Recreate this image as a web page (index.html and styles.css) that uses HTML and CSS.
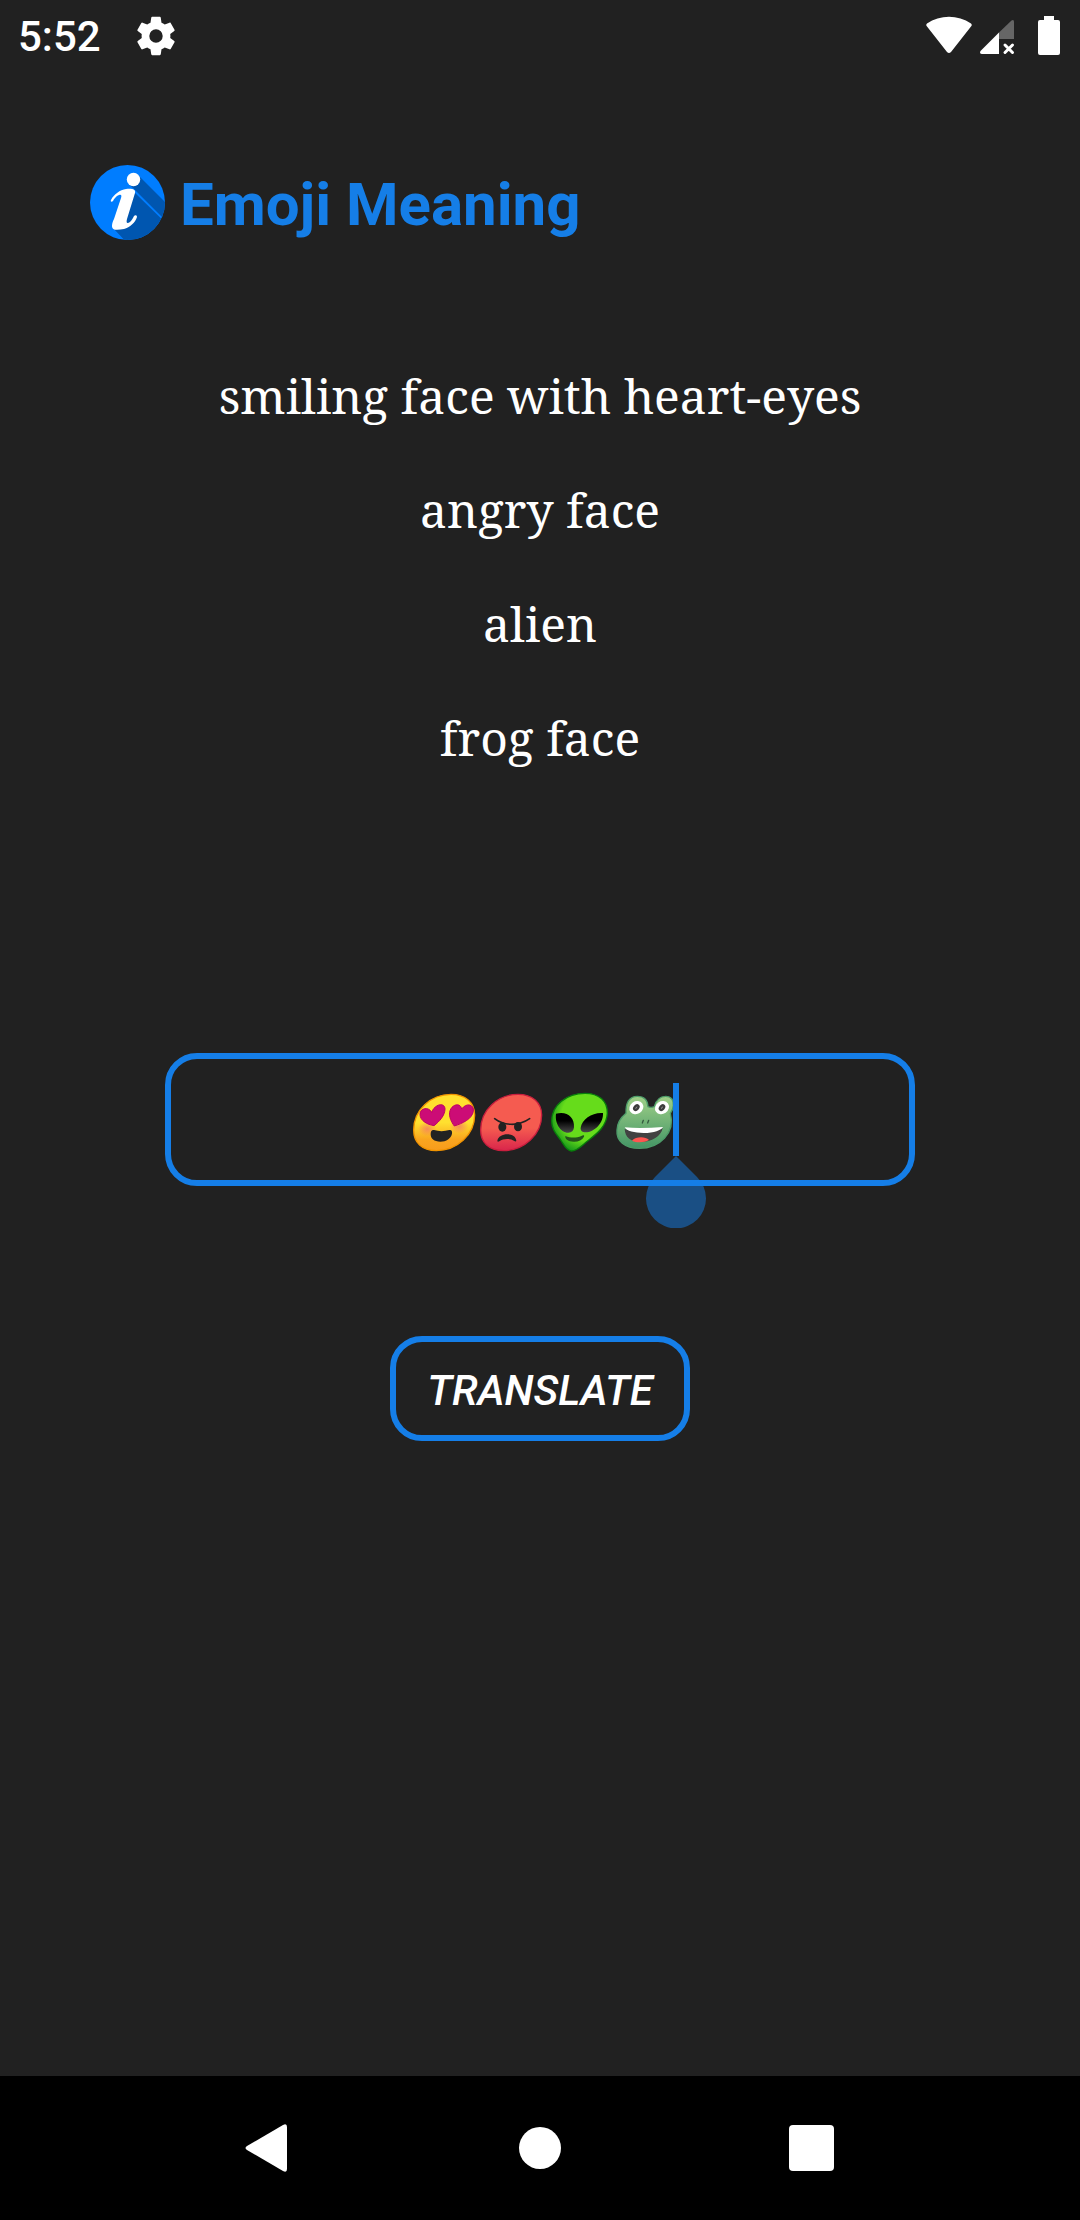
FILE: index.html
```
<!DOCTYPE html>
<html lang="en">
<head>
<meta charset="utf-8">
<meta name="viewport" content="width=device-width, initial-scale=1">
<title>Emoji Meaning</title>
<link rel="stylesheet" href="styles.css">
</head>
<body>
<div class="status">
  <span class="clock">5:52</span>
  <svg class="gear" viewBox="0 0 24 24" aria-hidden="true"><path fill="#fff" d="M19.43 12.98c.04-.32.07-.64.07-.98s-.03-.66-.07-.98l2.110-1.650c.19-.15.24-.42.12-.64l-2-3.460c-.12-.22-.39-.3-.61-.22l-2.490 1c-.52-.4-1.080-.73-1.690-.98l-.38-2.650A.488.488 0 0 0 14 2h-4c-.25 0-.46.18-.49.42l-.38 2.650c-.61.25-1.170.59-1.690.98l-2.490-1c-.23-.09-.49 0-.61.22l-2 3.460c-.13.22-.07.49.12.64l2.110 1.650c-.04.32-.07.65-.07.98s.03.66.07.98l-2.110 1.650c-.19.15-.24.42-.12.64l2 3.460c.12.22.39.3.61.22l2.490-1c.52.4 1.080.73 1.690.98l.38 2.650c.03.24.24.42.49.42h4c.25 0 .46-.18.49-.42l.38-2.650c.61-.25 1.170-.59 1.690-.98l2.490 1c.23.09.49 0 .61-.22l2-3.460c.12-.22.07-.49-.12-.64l-2.110-1.650zM12 15.500a3.500 3.500 0 1 1 0-7 3.500 3.500 0 0 1 0 7z"/></svg>
  <svg class="radios" viewBox="0 0 136 40" aria-hidden="true">
    <path fill="#fff" d="M1 10.500Q-.5 9 1 7.500C14-1.500 32-1.500 45 7.500Q46.500 9 45 10.500L25 36Q23 38 21 36z"/>
    <path fill="#666" d="M73 16.500 85.500 4.500Q88 3 88 6v17H73z"/>
    <path fill="#fff" d="M73 16.500V38H56q-3-.5-1.500-3z"/>
    <path fill="none" stroke="#fff" stroke-width="3" stroke-linecap="round" d="m79 29 7.500 7.500m0-7.500L79 36.500"/>
    <path fill="#fff" d="M118 0h10v4h4q2 0 2 2v31q0 2-2 2h-18q-2 0-2-2V6q0-2 2-2h4z"/>
  </svg>
</div>
<main class="screen">
  <header class="title">
    <svg class="logo" viewBox="0 0 75 75" aria-hidden="true">
      <defs><clipPath id="disc"><circle cx="37.500" cy="37.500" r="37.500"/></clipPath></defs>
      <g clip-path="url(#disc)">
        <path fill="#007dff" d="M0 0h75v75H0z"/>
        <path fill="#0056b0" d="M48 10 80 42v18L40 20zM42 25l38 37v20H41L23 63z"/>
      </g>
      <circle cx="43.500" cy="14.500" r="6.700" fill="#fff"/>
      <path fill="#fff" d="M21 35c3-6 9-10 15-11 6-.5 10 0 9 4L37 54c-1 4 0 5 3 3 2-2 3-4 4-6 1-1 3-1 3 1-2 6-7 10-13 12-6 1-12 2-12-3 0-3 1-5 2-7l7-21c1-3 0-4-2-3-3 1-5 4-6 6-1 1-3 1-2-1z"/>
    </svg>
    <h1>Emoji Meaning</h1>
  </header>
  <ul class="meanings">
    <li>smiling face with heart-eyes</li>
    <li>angry face</li>
    <li>alien</li>
    <li>frog face</li>
  </ul>
  <form class="form">
    <div class="field">
      <input class="entry" type="text" aria-label="Emoji" value="😍😡👽🐸">
      <div class="art" aria-hidden="true">
        <svg viewBox="54 40 201 219">
          <defs>
            <linearGradient id="sun" x2="0" y2="1"><stop offset=".5" stop-color="#ffe02f"/><stop offset=".8" stop-color="#f9a51f"/><stop offset="1" stop-color="#f79c1c"/></linearGradient>
            <linearGradient id="rage" x2="0" y2="1"><stop offset=".6" stop-color="#f55b50"/><stop offset="1" stop-color="#d9254b"/></linearGradient>
            <linearGradient id="eye" x2="0" y2="1"><stop offset=".4" stop-color="#000"/><stop offset="1" stop-color="#4a4a4a"/></linearGradient>
            <linearGradient id="pond" x2="0" y2="1"><stop offset="0" stop-color="#a0d088"/><stop offset="1" stop-color="#439565"/></linearGradient>
            <radialGradient id="blush"><stop stop-color="#f47c62" stop-opacity=".8"/><stop offset="1" stop-color="#f47c62" stop-opacity="0"/></radialGradient>
          </defs>
          <path fill="url(#sun)" stroke="#f09300" stroke-width="4" d="M183 74c43 0 71 25 71 62 0 60-54 107-115 107-43 0-68-24-68-62C71 121 122 74 183 74z"/>
          <ellipse cx="112" cy="178" rx="28" ry="22" fill="url(#blush)"/><ellipse cx="207" cy="170" rx="28" ry="22" fill="url(#blush)"/>
          <path fill="#cc0c76" stroke="#bd0064" stroke-width="3" d="M132 168c-20-3-42-15-42-34 0-19 26-24 35-6 8-24 39-32 40-10 0 19-17 38-33 50zM193 169c-9-12-16-27-14-41 3-23 32-32 36-10 14-20 38-14 35 7-4 24-33 36-57 44z"/>
          <path fill="#222" d="M132 181c16 5 32 4 46 0 7-1 9 4 8 11-3 14-17 24-35 24-19 0-29-9-29-22 0-8 2-14 10-13z"/>
        </svg>
        <svg viewBox="255 40 201 219">
          <path fill="url(#rage)" stroke="#c91f3e" stroke-width="4" d="M384 74c43 0 71 25 71 62 0 60-54 107-115 107-43 0-68-24-68-62C272 121 323 74 384 74z"/>
          <g fill="#222"><ellipse cx="337" cy="172" rx="12" ry="14"/><ellipse cx="384" cy="171" rx="12" ry="14"/></g>
          <path fill="none" stroke="#222" stroke-width="5" stroke-linecap="round" d="M314 147c28 22 72 23 105 0"/>
          <path fill="#222" d="M322 214c4-26 54-27 57-1 0 3-4 3-6 1-13-8-32-8-45 1-3 2-6 2-6-1z"/>
        </svg>
        <svg viewBox="456 40 201 219">
          <defs><radialGradient id="skin" cx=".6" cy=".4" r=".65"><stop offset=".65" stop-color="#66dc1b"/><stop offset="1" stop-color="#15951a"/></radialGradient></defs>
          <path fill="url(#skin)" stroke="#087d0b" stroke-width="4" d="M585 71c43 0 68 24 67 60-2 44-39 66-69 91-17 15-29 22-39 22-14-1-22-18-32-33-12-17-27-31-27-57C485 106 530 71 585 71z"/>
          <path fill="url(#eye)" d="M498 132c32-9 56 10 54 41-1 10-7 16-17 16-25 0-41-31-37-57zM639 130c-31-3-63 18-67 44-1 9 5 14 15 14 26 0 54-28 52-58z"/>
          <path fill="#24531c" d="M526 199c15 6 33 6 48 0 4-2 10-4 8 2-6 11-18 16-32 15-14 0-26-7-24-17z"/>
        </svg>
        <svg viewBox="657 40 201 219">
          <path fill="url(#pond)" stroke="#4d9b69" stroke-width="4" d="M742 80c20 0 31 12 32 31 6 3 12 3 19 0 5-19 17-31 34-31 18 0 24 12 23 28-1 10-5 18-9 23 16 57-31 105-93 105-44 0-70-23-67-55 1-22 11-37 27-50-1-31 9-51 34-51z"/>
          <g fill="#fff"><ellipse cx="739" cy="114" rx="22" ry="19" transform="rotate(-35 739 114)"/><ellipse cx="816" cy="114" rx="22" ry="19" transform="rotate(-35 816 114)"/></g>
          <g fill="#8a8a8a" stroke="#3c3c3c" stroke-width="7"><ellipse cx="739" cy="114" rx="8" ry="5" transform="rotate(-50 739 114)"/><ellipse cx="816" cy="114" rx="8" ry="5" transform="rotate(-50 816 114)"/></g>
          <path stroke="#34593f" stroke-width="4" stroke-linecap="round" d="m760 152-3 8m19-8-3 8"/>
          <path fill="#424242" d="M704 178c36 12 78 11 114-3-4 24-32 42-68 42-28 0-45-15-46-39z"/>
          <path fill="#fff" d="M704 173c38 4 76 2 115-1-5 10-27 18-58 18-28 0-51-6-57-17z"/>
          <path fill="#ff5550" d="M726 213c12-13 40-13 51-2-14 8-37 9-51 2z"/>
        </svg>
      </div>
      <span class="caret"></span>
      <svg class="handle" viewBox="0 0 60 72" aria-hidden="true"><path d="M30 0 51 21A30 30 0 1 1 9 21z"/></svg>
    </div>
    <button class="go" type="button">TRANSLATE</button>
  </form>
</main>
<nav class="keys">
  <button type="button" aria-label="Back"><svg viewBox="0 0 48 48"><path d="M39 1q4-2 4 2v42q0 4-4 2L3 26q-3-2 0-4z"/></svg></button>
  <button type="button" aria-label="Home"><svg viewBox="0 0 48 48"><circle cx="24" cy="24" r="21"/></svg></button>
  <button type="button" aria-label="Recent apps"><svg viewBox="0 0 48 48"><rect x="1" y="1" width="45" height="46" rx="4"/></svg></button>
</nav>
</body>
</html>
```
FILE: styles.css
```
* { box-sizing: border-box; }

body {
  margin: 0;
  min-height: 100vh;
  display: flex;
  flex-direction: column;
  background: #212121;
  color: #fff;
  font-family: Roboto, sans-serif;
}

svg { display: block; }

.status {
  height: 72px;
  padding: 0 18px;
  display: flex;
  align-items: center;
}
.clock {
  padding-top: 2px;
  font-size: 42px;
  line-height: 48px;
  font-weight: 500;
}
.gear {
  width: 46px;
  height: 46px;
  margin-left: 32px;
}
.radios {
  width: 136px;
  height: 40px;
  margin-left: auto;
}

.screen {
  flex: 1;
  display: flex;
  flex-direction: column;
}

.title {
  display: flex;
  align-items: center;
  gap: 15px;
  padding: 93px 90px 0;
}
.logo {
  width: 75px;
  height: 75px;
}
h1 {
  margin: 0;
  padding-top: 4px;
  font-size: 60px;
  line-height: 71px;
  font-weight: 700;
  color: #157ee7;
}

.meanings {
  list-style: none;
  margin: 99px 0 0;
  padding: 0;
  text-align: center;
  font-family: "Noto Serif", serif;
  font-size: 48px;
  line-height: 114px;
}

.form {
  margin-top: 258px;
  padding: 0 165px;
  display: flex;
  flex-direction: column;
  align-items: center;
  gap: 150px;
}
.field {
  position: relative;
  width: 100%;
}
.entry {
  display: block;
  width: 100%;
  height: 133px;
  padding: 0 24px;
  border: 6px solid #157ee7;
  border-radius: 32px;
  background: none;
  color: transparent;
  font: italic 56px Roboto, sans-serif;
  text-align: center;
  outline: none;
}
/* The app's own emoji set, laid over the typed characters. */
.art {
  position: absolute;
  top: 30px;
  left: 50%;
  display: flex;
  transform: translateX(-132px);
  pointer-events: none;
}
.art svg {
  width: 67px;
  height: 73px;
  overflow: visible;
}
.caret {
  position: absolute;
  top: 30px;
  left: calc(50% + 133px);
  width: 6px;
  height: 73px;
  background: #157ee7;
}
.handle {
  position: absolute;
  top: 103px;
  left: calc(50% + 106px);
  width: 60px;
  height: 72px;
  fill: #157ee7;
  opacity: .5;
}

.go {
  width: 300px;
  height: 105px;
  padding: 4px 0 0;
  border: 6px solid #157ee7;
  border-radius: 32px;
  background: none;
  color: #fff;
  font: italic 500 42px/48px Roboto, sans-serif;
}

.keys {
  height: 144px;
  padding: 0 132px;
  display: flex;
  background: #000;
}
.keys button {
  flex: 1;
  display: flex;
  align-items: center;
  justify-content: center;
  padding: 0;
  border: 0;
  background: none;
}
.keys svg {
  width: 48px;
  height: 48px;
  fill: #fff;
}
```
